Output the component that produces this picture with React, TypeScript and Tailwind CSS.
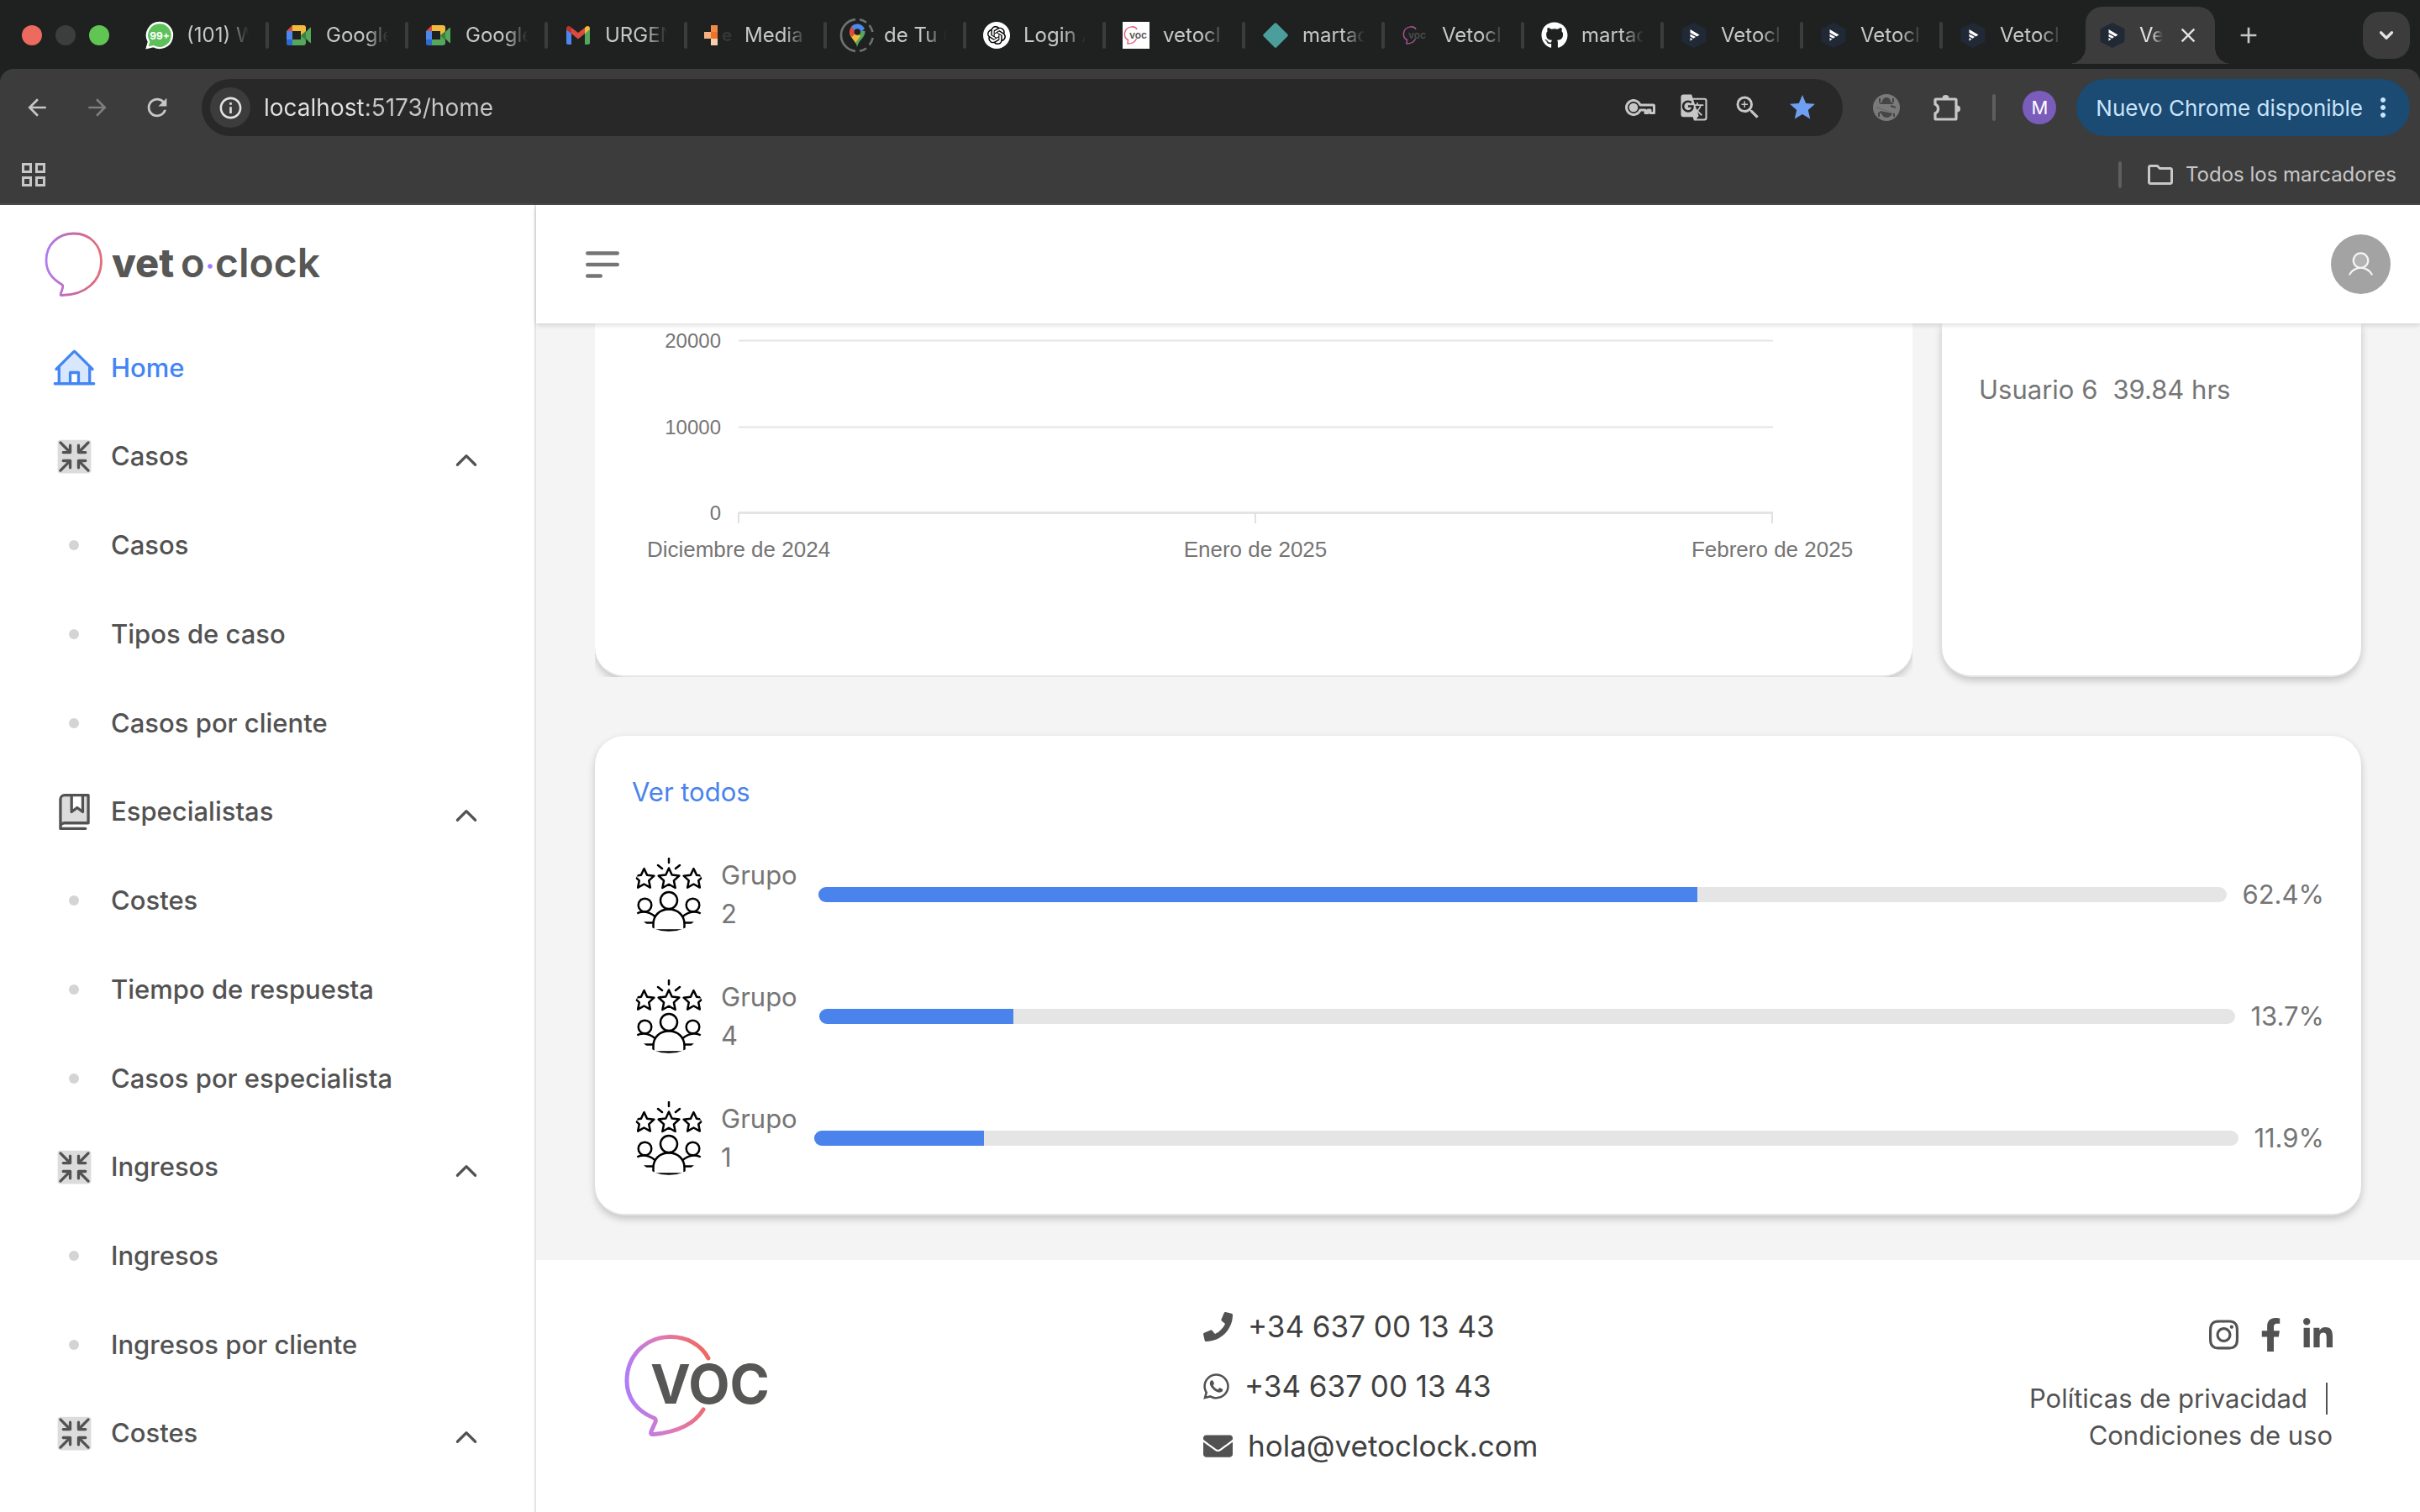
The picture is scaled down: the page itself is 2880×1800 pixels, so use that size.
import React from "react";
import {
  PiArrowsInDuotone,
  PiBookBookmarkDuotone,
  PiCaretUpBold,
  PiHouseLineDuotone,
  PiUserDuotone,
} from "react-icons/pi";
import {
  FaEnvelope,
  FaFacebookF,
  FaGithub,
  FaInstagram,
  FaLinkedinIn,
  FaPhone,
  FaWhatsapp,
} from "react-icons/fa";
import {
  MdAdd,
  MdArrowBack,
  MdArrowForward,
  MdClose,
  MdGTranslate,
  MdInfoOutline,
  MdMoreVert,
  MdOutlineFolder,
  MdRefresh,
  MdStar,
  MdZoomIn,
} from "react-icons/md";
import { SiOpenai } from "react-icons/si";
import { ChevronDown } from "lucide-react";

/* ---------- favicons ---------- */

function WhatsappIcon() {
  return (
    <svg viewBox="0 0 32 32" className="size-8 shrink-0 overflow-visible" aria-hidden="true">
      <path d="M16 1a15 15 0 1 1-7.2 28.2L1 31l2-7.4A15 15 0 0 1 16 1z" fill="#5cc15a" stroke="#fff" strokeWidth="2.4" />
      <text x="16" y="20.5" textAnchor="middle" fontSize="12" fontWeight="700" fill="#fff" fontFamily="Inter, sans-serif">
        99+
      </text>
    </svg>
  );
}

function MeetIcon() {
  return (
    <svg viewBox="0 0 32 32" className="size-8 shrink-0" aria-hidden="true">
      <path d="M1 11 8 4v7z" fill="#dc4b3e" />
      <path d="M8 4h13a3 3 0 0 1 3 3v6l-6 5v-7H8z" fill="#f3bb3c" />
      <path d="M1 11h7v10H1z" fill="#4d88ee" />
      <path d="M1 21h7v7H3a2 2 0 0 1-2-2z" fill="#2f68cf" />
      <path d="M8 21h10v-5l6 5v4a3 3 0 0 1-3 3H8z" fill="#55a75b" />
      <path d="m18 16 6-5v11z" fill="#3d7f41" />
      <path d="m24 12 5-5c1-.6 1 0 1 .6v17c0 .6-.5 1-1 .4l-5-5z" fill="#55a75b" />
    </svg>
  );
}

function GmailIcon() {
  return (
    <svg viewBox="0 0 32 32" className="size-8 shrink-0" aria-hidden="true">
      <path d="M2 8v17a2 2 0 0 0 2 2h4V13z" fill="#4d88ee" />
      <path d="M24 13v14h4a2 2 0 0 0 2-2V8z" fill="#55a75b" />
      <path d="M24 7v7l6-5V8c0-3-3-4-5-2z" fill="#f3bb3c" />
      <path d="M8 14V7L7 6C5 4 2 5 2 8v1.500z" fill="#b8352b" />
      <path d="m8 7 8 6 8-6v7l-8 6.500L8 14z" fill="#dc4b3e" />
    </svg>
  );
}

function MediaIcon() {
  return (
    <svg viewBox="0 0 32 32" className="size-8 shrink-0 overflow-visible" aria-hidden="true">
      <path d="M8 4h8v8H8z" fill="#f08a44" />
      <path d="M8 12h8v8H8z" fill="#ec7329" />
      <path d="M0 12h8v8H0z" fill="#f5b183" />
      <path d="M8 20h8v8H8z" fill="#f8cfae" />
      <text x="21" y="23" fontSize="20" fontWeight="700" fill="#343635" fontFamily="Inter, sans-serif">
        e
      </text>
    </svg>
  );
}

function MapsIcon() {
  return (
    <svg viewBox="0 0 32 32" className="size-8 shrink-0 overflow-visible" aria-hidden="true">
      <path
        d="M14 34.900A19 19 0 0 1 14-2.900M19-2.700a19 19 0 0 1 8 3.500M30.500 4a19 19 0 0 1 4 8M34.700 19a19 19 0 0 1-4 8.500M27 31.500a19 19 0 0 1-8 3.300"
        fill="none"
        stroke="#707271"
        strokeWidth="2.600"
      />
      <path d="M16 30c-1-5-3.500-7-6-10.500L18 10l7.500 1C26 19 18 21 16 30z" fill="#55a75b" />
      <path d="M10.500 20C8 17 7 14 7 12l6-1 7 6-6 8c-1-2-2-3.500-3.500-5z" fill="#f3bb3c" />
      <path d="M7 12c0-3 1-5 2.500-6.500L16 11l-6 7c-2-2.500-3-4-3-6z" fill="#dc4b3e" />
      <path d="M9.300 5.700C13 1 22 1.500 25 8.500L17 14z" fill="#4d88ee" />
      <circle cx="16.300" cy="12" r="3.800" fill="#1f2120" />
    </svg>
  );
}

function OpenAiIcon() {
  return (
    <span className="flex size-8 shrink-0 items-center justify-center rounded-full bg-white text-[22px] text-black">
      <SiOpenai />
    </span>
  );
}

function VocFavicon({ dark }: { dark?: boolean }) {
  return (
    <svg viewBox="0 0 32 32" className="size-8 shrink-0" aria-hidden="true">
      {!dark && <path d="M0 0h32v32H0z" fill="#fff" />}
      <path
        d="M17 9C15 4 4 5 2.500 13c-.6 4 1 7 4 8.500L6 26c5 0 9-2 10.500-6"
        fill="none"
        stroke={dark ? "#a0548e" : "#e5677f"}
        strokeWidth="1.500"
      />
      <text x="18.500" y="19.500" textAnchor="middle" fontSize="12" fontWeight="600" fill={dark ? "#4b4d4c" : "#555"} fontFamily="Inter, sans-serif">
        voc
      </text>
    </svg>
  );
}

function DiamondIcon() {
  return (
    <svg viewBox="0 0 32 32" className="size-8 shrink-0" aria-hidden="true">
      <path d="M14.500 2a2 2 0 0 1 3 0L30 14.500a2 2 0 0 1 0 3L17.500 30a2 2 0 0 1-3 0L2 17.500a2 2 0 0 1 0-3z" fill="#4a9e9c" />
    </svg>
  );
}

function GithubIcon() {
  return <FaGithub className="size-8 shrink-0 text-white" />;
}

function HexIcon() {
  return (
    <svg viewBox="0 0 32 32" className="size-8 shrink-0" aria-hidden="true">
      <path d="M16 1 29 7.500a2 2 0 0 1 1.500 2v13a2 2 0 0 1-1.500 2L16 31 3 24.500a2 2 0 0 1-1.500-2v-13A2 2 0 0 1 3 7.500z" fill="#212936" />
      <path d="m11.500 9 11 6.500-3 2-8-4.500z" fill="#fff" />
      <path d="m11.500 14.500 6.500 3.600-2.400 1.600-4.100-2.300zM11.500 19l3 1.600-3 2.200z" fill="#fff" />
    </svg>
  );
}

/* ---------- browser chrome ---------- */

const tabs: { label: string; icon: React.ReactNode }[] = [
  { label: "(101) W", icon: <WhatsappIcon /> },
  { label: "Google", icon: <MeetIcon /> },
  { label: "Google", icon: <MeetIcon /> },
  { label: "URGEN", icon: <GmailIcon /> },
  { label: "Media", icon: <MediaIcon /> },
  { label: "de Tu u", icon: <MapsIcon /> },
  { label: "Login A", icon: <OpenAiIcon /> },
  { label: "vetocl", icon: <VocFavicon /> },
  { label: "martac", icon: <DiamondIcon /> },
  { label: "Vetocl", icon: <VocFavicon dark /> },
  { label: "martac", icon: <GithubIcon /> },
  { label: "Vetocl", icon: <HexIcon /> },
  { label: "Vetocl", icon: <HexIcon /> },
  { label: "Vetocl", icon: <HexIcon /> },
];

function TabStrip() {
  return (
    <div className="flex h-[82px] items-center bg-[#1f2120] pt-px pr-3 pl-[26px] text-[24px] text-[#c7c7c7]">
      <div className="mr-6 flex shrink-0 gap-4">
        <span className="size-6 rounded-full bg-[#ed6a5e]" />
        <span className="size-6 rounded-full bg-[#3c3e3d]" />
        <span className="size-6 rounded-full bg-[#61c554]" />
      </div>
      <div role="tablist" className="flex min-w-0 flex-1 items-center">
        {tabs.map((tab, i) => (
          <button key={i} role="tab" aria-selected="false" className="flex h-[68px] max-w-[166px] min-w-0 flex-1 items-center pl-5">
            {tab.icon}
            <span className="ml-4 min-w-0 flex-1 overflow-hidden text-left whitespace-nowrap [mask-image:linear-gradient(to_right,#000_65%,transparent)]">
              {tab.label}
            </span>
            <span className={i < tabs.length - 1 ? "ml-5 h-8 w-1 shrink-0 rounded-full bg-[#3c3c3c]" : "ml-5 w-1 shrink-0"} />
          </button>
        ))}
        <div className="relative ml-1 flex h-[68px] w-[154px] shrink-0 items-center self-end rounded-t-[20px] bg-[#3c3c3c] pl-4">
          <span className="absolute bottom-0 left-[-20px] size-5 bg-[radial-gradient(circle_at_top_left,transparent_20px,#3c3c3c_20px)]" />
          <span className="absolute right-[-20px] bottom-0 size-5 bg-[radial-gradient(circle_at_top_right,transparent_20px,#3c3c3c_20px)]" />
          <button role="tab" aria-selected="true" className="flex items-center text-[#e3e3e3]">
            <HexIcon />
            <span className="ml-4 w-7 overflow-hidden text-left [mask-image:linear-gradient(to_right,#000_50%,transparent)]">Ve</span>
          </button>
          <button aria-label="Cerrar pestaña" className="ml-4 text-[28px] text-[#e3e3e3]">
            <MdClose />
          </button>
        </div>
        <button aria-label="Nueva pestaña" className="ml-6 text-[32px]">
          <MdAdd />
        </button>
      </div>
      <button aria-label="Buscar pestañas" className="flex size-14 shrink-0 items-center justify-center rounded-[20px] bg-[#3c3c3c] text-[#e3e3e3]">
        <ChevronDown size={26} strokeWidth={3} />
      </button>
    </div>
  );
}

function KeyIcon() {
  return (
    <svg viewBox="0 0 36 20" className="h-5 w-9" fill="none" stroke="currentColor" strokeWidth="3" aria-hidden="true">
      <path d="M18 7h15.500a1 1 0 0 1 1 1v8.500H30V13h-3v3.500h-3V13h-6A8.500 8.500 0 1 1 18 7z" strokeLinejoin="round" />
      <circle cx="10" cy="10" r="3.800" fill="currentColor" />
    </svg>
  );
}

function BlockedBugIcon() {
  return (
    <svg viewBox="0 0 32 32" className="size-8" aria-hidden="true">
      <circle cx="16" cy="16" r="16" fill="#7a7a7a" />
      <path d="M11 9a5 5 0 0 1 10 0l4 3H7zM9 20l14 3c-1 3-4 5-7 5s-6-3-7-8z" fill="#454545" />
      <path d="M8 5v5M24 5v5M4 15l22 7M27 16l-6-2M7 27v-4l3-2M25 27v-4" stroke="#454545" strokeWidth="2" fill="none" />
      <path d="m3 13 26 9" stroke="#7a7a7a" strokeWidth="4" />
    </svg>
  );
}

function PuzzleIcon() {
  return (
    <svg viewBox="0 0 34 34" className="size-[34px]" aria-hidden="true">
      <path
        d="M3 7h23a1 1 0 0 1 1 1v22a1 1 0 0 1-1 1H3a1 1 0 0 1-1-1v-6a6 6 0 0 0 0-11V8a1 1 0 0 1 1-1z"
        fill="none"
        stroke="currentColor"
        strokeWidth="3.200"
      />
      <path d="M10.500 6a4 4 0 0 1 8 0zM28 14.500a4 4 0 0 1 0 8z" fill="currentColor" />
    </svg>
  );
}

function Toolbar() {
  return (
    <div className="bg-[#1f2120]">
      <div className="flex items-center rounded-t-2xl bg-[#3c3c3c] pt-3 pr-3 pl-7 text-[#c7c7c7]">
        <button aria-label="Atrás" className="text-[32px]">
          <MdArrowBack />
        </button>
        <button aria-label="Adelante" className="ml-10 text-[32px] text-[#7d7d7d]">
          <MdArrowForward />
        </button>
        <button aria-label="Recargar" className="ml-[38px] text-[34px]">
          <MdRefresh />
        </button>
        <div className="ml-9 flex h-[68px] min-w-0 flex-1 items-center rounded-full bg-[#282828] pr-[34px] pl-[10px]">
          <button aria-label="Información del sitio" className="flex size-12 items-center justify-center rounded-full bg-[#3c3c3c] text-[31px] text-[#e3e3e3]">
            <MdInfoOutline />
          </button>
          <div className="ml-4 min-w-0 flex-1 text-[28px] text-[#c7c7c7]">
            <input
              aria-label="Dirección"
              defaultValue="localhost:5173/home"
              className="w-full bg-[linear-gradient(to_right,#e3e3e3_118px,#c7c7c7_118px)] bg-clip-text text-transparent outline-none"
            />
          </div>
          <div className="flex items-center gap-[29px]">
            <button aria-label="Contraseñas">
              <KeyIcon />
            </button>
            <button aria-label="Traducir" className="text-[34px]">
              <MdGTranslate />
            </button>
            <button aria-label="Zoom" className="text-[36px]">
              <MdZoomIn />
            </button>
            <button aria-label="Editar marcador" className="-mr-1 text-[36px] text-[#6f9ff2]">
              <MdStar />
            </button>
          </div>
        </div>
        <button aria-label="Depurador" className="ml-9">
          <BlockedBugIcon />
        </button>
        <button aria-label="Extensiones" className="ml-10">
          <PuzzleIcon />
        </button>
        <span className="ml-9 h-8 w-1 rounded-full bg-[#5e5e5e]" />
        <button aria-label="Perfil" className="ml-8 flex size-10 items-center justify-center rounded-full bg-[#7a5cbb] text-[22px] text-white">
          M
        </button>
        <button className="ml-6 flex h-[68px] items-center rounded-full bg-[#1b4a72] pr-[14px] pl-[23px] text-[26px] text-[#c8e4fb]">
          <span>Nuevo Chrome disponible</span>
          <MdMoreVert className="ml-1.5 size-9" />
        </button>
      </div>
      <div className="flex h-[82px] items-center justify-between border-b-2 border-[#4a4848] bg-[#3c3c3c] pt-3 pr-7 pl-6 text-[#c7c7c7]">
        <button aria-label="Aplicaciones">
          <svg viewBox="0 0 32 32" className="size-8" fill="none" stroke="currentColor" strokeWidth="3" aria-hidden="true">
            <path d="M3.500 3.500h9v9h-9zM19.500 3.500h9v9h-9zM3.500 19.500h9v9h-9zM19.500 19.500h9v9h-9z" />
          </svg>
        </button>
        <div className="flex items-center">
          <span className="h-8 w-1 rounded-full bg-[#5e5e5e]" />
          <button className="ml-7 flex items-center gap-3 text-[24px]">
            <MdOutlineFolder className="size-9" />
            <span>Todos los marcadores</span>
          </button>
        </div>
      </div>
    </div>
  );
}

/* ---------- sidebar ---------- */

function VetoclockLogo() {
  return (
    <svg viewBox="0 0 340 80" className="h-20 w-[340px]" aria-label="vetoclock" role="img">
      <defs>
        <linearGradient id="veto-bubble" x1="0" x2="1" y1="0" y2="0">
          <stop offset="0" stopColor="#ae7cf0" />
          <stop offset="0.500" stopColor="#c867a8" />
          <stop offset="1" stopColor="#e27078" />
        </linearGradient>
      </defs>
      <path
        d="M22 65C12 59 3 51 3 36 3 17 17 4 36 4s32.500 14 32.500 33C68.500 60 50 78 20.500 77.500 19 77.500 22 72 22.500 68.500 22.700 67 23.500 66 22 65z"
        fill="none"
        stroke="url(#veto-bubble)"
        strokeWidth="2.800"
      />
      <g fill="#575756" fontFamily="Inter, sans-serif">
        <text x="81" y="56" fontSize="47" fontWeight="800">vet</text>
        <text x="163" y="56" fontSize="47" fontWeight="600">o</text>
        <text x="204" y="56" fontSize="48" fontWeight="600">clock</text>
      </g>
      <circle cx="198" cy="43" r="2.800" fill="#a277ff" />
    </svg>
  );
}

type Group = { label: string; icon: "arrows" | "book"; items: string[] };

const groups: Group[] = [
  { label: "Casos", icon: "arrows", items: ["Casos", "Tipos de caso", "Casos por cliente"] },
  { label: "Especialistas", icon: "book", items: ["Costes", "Tiempo de respuesta", "Casos por especialista"] },
  { label: "Ingresos", icon: "arrows", items: ["Ingresos", "Ingresos por cliente"] },
  { label: "Costes", icon: "arrows", items: ["Costes"] },
];

function Sidebar() {
  return (
    <aside className="flex w-[638px] shrink-0 flex-col overflow-hidden border-r-2 border-[#e5e5e5] bg-white">
      <a href="#home" className="mt-[30px] ml-[52px] shrink-0">
        <VetoclockLogo />
      </a>
      <nav className="mt-8 shrink-0 pr-[64px] pl-[62px] text-[31px] font-medium text-[#525252]">
        <a href="#home" className="flex h-[105px] items-center gap-[17px] text-[#4285f4]">
          <PiHouseLineDuotone className="size-[53px]" />
          Home
        </a>
        {groups.map((group) => (
          <div key={group.label}>
            <button aria-expanded="true" className="flex h-[105px] w-full items-center gap-[17px]">
              {group.icon === "book" ? <PiBookBookmarkDuotone className="size-[53px]" /> : <PiArrowsInDuotone className="size-[53px]" />}
              <span className="flex-1 text-left">{group.label}</span>
              <PiCaretUpBold className="mt-2.5 size-[34px]" />
            </button>
            <ul>
              {group.items.map((item) => (
                <li key={item}>
                  <a href="#seccion" className="flex h-[106px] items-center">
                    <span className="mr-[38px] ml-5 size-3 rounded-full bg-[#d4d4d4]" />
                    {item}
                  </a>
                </li>
              ))}
            </ul>
          </div>
        ))}
      </nav>
    </aside>
  );
}

/* ---------- main content ---------- */

function Header() {
  return (
    <header className="relative z-10 flex h-[141px] shrink-0 items-center justify-between bg-white pr-[35px] pl-[59px] shadow-[0_2px_6px_rgba(0,0,0,0.15)]">
      <button aria-label="Menú">
        <svg viewBox="0 0 40 34" className="h-[34px] w-10" stroke="#757575" strokeWidth="4.400" strokeLinecap="round" aria-hidden="true">
          <path d="M2.200 3.500h35.600M2.200 17h35.600M2.200 30.500h15.600" />
        </svg>
      </button>
      <button aria-label="Cuenta" className="flex size-[71px] items-center justify-center rounded-full bg-[#a3a3a3] text-[#f5f5f5]">
        <PiUserDuotone className="size-[35px]" />
      </button>
    </header>
  );
}

const yTicks = [
  { label: "20000", y: 20 },
  { label: "10000", y: 123 },
  { label: "0", y: 225 },
];

const xTicks = [
  { label: "Diciembre de 2024", x: 171 },
  { label: "Enero de 2025", x: 786 },
  { label: "Febrero de 2025", x: 1401 },
];

function ChartCard() {
  return (
    <div className="overflow-hidden">
      <div className="rounded-b-[35px] border-b-2 border-[#e5e5e5] bg-white shadow-[0_4px_10px_rgba(0,0,0,0.2)]">
        <svg viewBox="0 0 1568 419" className="block h-auto w-full" fontFamily="'Liberation Sans', sans-serif" fill="#757575" role="img" aria-label="Importe por mes">
          {yTicks.map((t) => (
            <g key={t.label}>
              <path d={`M171 ${t.y}.500H1402`} stroke="#e4e4e4" strokeWidth={t.y === 225 ? 3 : 2} />
              <text x="150" y={t.y + 9} fontSize="24" textAnchor="end">
                {t.label}
              </text>
            </g>
          ))}
          {xTicks.map((t) => (
            <g key={t.label}>
              <path d={`M${t.x} 225v13`} stroke="#e0e0e0" strokeWidth="2" />
              <text x={t.x} y="278" fontSize="26" textAnchor="middle">
                {t.label}
              </text>
            </g>
          ))}
        </svg>
      </div>
    </div>
  );
}

function Star({ cx, cy, r }: { cx: number; cy: number; r: number }) {
  const points = Array.from({ length: 10 }, (_, i) => {
    const radius = i % 2 === 0 ? r : r * 0.48;
    const angle = (Math.PI / 5) * i - Math.PI / 2;
    return `${cx + radius * Math.cos(angle)},${cy + radius * Math.sin(angle)}`;
  }).join(" ");
  return <polygon points={points} />;
}

function TeamIcon() {
  return (
    <svg viewBox="0 0 88 88" className="size-[88px] shrink-0 rounded-full" fill="none" stroke="#000" strokeWidth="2.500" strokeLinejoin="round" strokeLinecap="round" aria-hidden="true">
      <path d="M44 1v5M31 9l5 4M57 9l-5 4" />
      <Star cx={44} cy={25.5} r={13} />
      <Star cx={14.5} cy={25.5} r={12.500} />
      <Star cx={73.5} cy={25.5} r={12.500} />
      <circle cx="44" cy="51" r="10" />
      <circle cx="15.500" cy="56.500" r="7.800" />
      <circle cx="72.500" cy="56.500" r="7.800" />
      <path d="M25.500 84v-5C25.500 69 33 61.500 44 61.500S62.500 69 62.500 79v5M25 86.500h38" />
      <path d="M4 68c6-5 15-5 23.500 2M84 68c-6-5-15-5-23.500 2M14 77.500h11M63 77.500h11" />
    </svg>
  );
}

const results = [
  { group: "2", value: 62.4, labelWidth: "w-[98px]" },
  { group: "4", value: 13.7, labelWidth: "w-[99px]" },
  { group: "1", value: 11.9, labelWidth: "w-[93px]" },
];

function GroupsCard() {
  return (
    <section className="mt-[70px] rounded-[35px] border-b-2 border-[#e5e5e5] bg-white px-11 pt-11 pb-[18px] shadow-[0_4px_10px_rgba(0,0,0,0.2)]">
      <a href="#todos" className="block text-[31px] leading-[46px] text-[#4a83ec]">
        Ver todos
      </a>
      <ul className="mt-[26px]">
        {results.map((r) => (
          <li key={r.group} className="flex h-[145px] items-center text-[31px] leading-[46px] text-[#757575]">
            <TeamIcon />
            <span className={`ml-[18px] mr-[18px] shrink-0 ${r.labelWidth}`}>
              Grupo
              <br />
              {r.group}
            </span>
            <div role="progressbar" aria-label={`Grupo ${r.group}`} aria-valuenow={r.value} className="h-[18px] flex-1 overflow-hidden rounded-full bg-[#e5e5e5]">
              <div className="h-full bg-[#4a83ec]" style={{ width: `${r.value}%` }} />
            </div>
            <span className="ml-[18px]">{r.value}%</span>
          </li>
        ))}
      </ul>
    </section>
  );
}

function VocLogo() {
  return (
    <svg viewBox="0 0 180 124" className="h-[124px] w-[180px]" role="img" aria-label="VOC">
      <defs>
        <linearGradient id="voc-bubble" x1="0" x2="1" y1="0.600" y2="0.400">
          <stop offset="0" stopColor="#ad7dfb" />
          <stop offset="0.500" stopColor="#df7ab5" />
          <stop offset="1" stopColor="#ee6a60" />
        </linearGradient>
      </defs>
      <path
        d="M101 29C92 12 74 3 55 3.500 25 4 4 27 4 56c0 20 12 36 32 44 3 1 2.500 3 2 5l-5 11c-1 3 0 4 3 3.500C62 117 84 108 95 90"
        fill="none"
        stroke="url(#voc-bubble)"
        strokeWidth="5"
        strokeLinecap="round"
      />
      <text x="32" y="83" fontSize="64" fontWeight="700" fill="#575756" fontFamily="Inter, sans-serif">
        VOC
      </text>
    </svg>
  );
}

function Footer() {
  return (
    <footer className="grid flex-1 grid-cols-3 items-center bg-white px-[104px] text-[#525252]">
      <VocLogo />
      <address className="pl-3 text-[35px] leading-[71px] text-[#404040] not-italic">
        <a href="tel:+34637001343" className="flex items-center gap-[18px]">
          <FaPhone className="size-[35px] text-[#525252]" />
          +34 637 00 13 43
        </a>
        <a href="#whatsapp" className="flex items-center gap-[18px]">
          <FaWhatsapp className="h-[35px] w-[31px] text-[#525252]" />
          +34 637 00 13 43
        </a>
        <a href="mailto:hola@vetoclock.com" className="flex items-center gap-[18px]">
          <FaEnvelope className="size-[35px] text-[#525252]" />
          hola@vetoclock.com
        </a>
      </address>
      <div className="flex flex-col items-end">
        <div className="flex gap-[26px]">
          <a href="#instagram" aria-label="Instagram">
            <FaInstagram className="h-10 w-[35px]" />
          </a>
          <a href="#facebook" aria-label="Facebook">
            <FaFacebookF className="h-10 w-[25px]" />
          </a>
          <a href="#linkedin" aria-label="LinkedIn">
            <FaLinkedinIn className="h-10 w-[35px]" />
          </a>
        </div>
        <div className="mt-[34px] flex flex-col items-end text-[31px] leading-[44px]">
          <div className="flex items-center">
            <a href="#privacidad">Políticas de privacidad</a>
            <span className="mr-1.5 ml-[22px] h-[38px] w-0.5 bg-[#525252]" />
          </div>
          <a href="#condiciones">Condiciones de uso</a>
        </div>
      </div>
    </footer>
  );
}

export default function App() {
  return (
    <div className="flex h-screen flex-col overflow-hidden font-['Inter',sans-serif]">
      <TabStrip />
      <Toolbar />
      <div className="flex min-h-0 flex-1">
        <Sidebar />
        <main className="flex min-w-0 flex-1 flex-col bg-[#f4f4f4]">
          <Header />
          <div className="px-[70px] pb-[53px]">
            <div className="grid grid-cols-[1fr_499px] gap-[35px]">
              <ChartCard />
              <section className="rounded-b-[35px] border-b-2 border-[#e5e5e5] bg-white px-11 pt-14 text-[31px] leading-[46px] text-[#757575] shadow-[0_4px_10px_rgba(0,0,0,0.2)]">
                <p className="flex gap-[18px]">
                  <span>Usuario 6</span>
                  <span>39.84 hrs</span>
                </p>
              </section>
            </div>
            <GroupsCard />
          </div>
          <Footer />
        </main>
      </div>
    </div>
  );
}
